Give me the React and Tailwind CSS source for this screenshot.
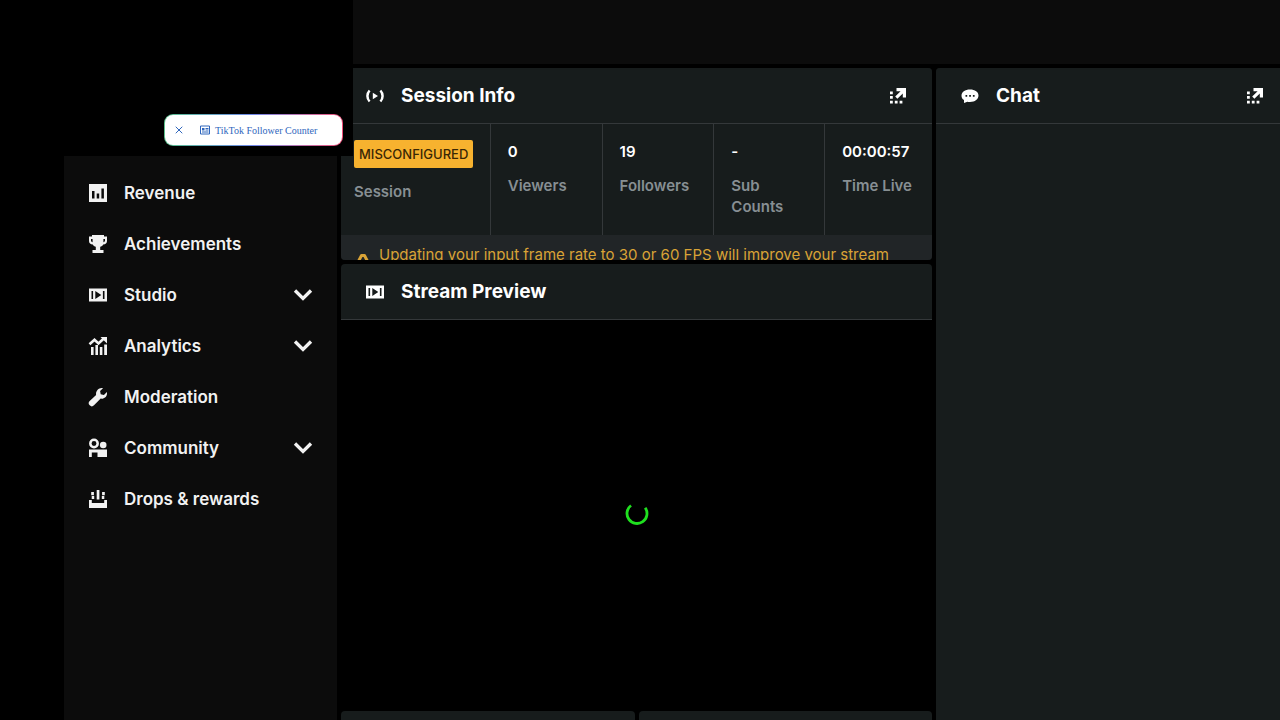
import { X } from "lucide-react";

function Icon({ children, className = "h-5 w-5" }) {
  return (
    <svg viewBox="0 0 20 20" fill="currentColor" aria-hidden="true" className={`shrink-0 ${className}`}>
      {children}
    </svg>
  );
}

const RevenueIcon = () => (
  <Icon>
    <path fillRule="evenodd" d="M1 1h18v18H1zM4 8v7.5h2.500V8zM8.700 10.500v5h2.500v-5zM13.400 5.500v10h2.500v-10z" />
  </Icon>
);

const TrophyIcon = () => (
  <Icon>
    <path
      fillRule="evenodd"
      d="M4 1h12v1.500h3V7c0 2-1.500 3.500-3.800 3.500c-.7 1.400-1.700 2-3 2.300V16h3.300v3h-11v-3h3.300v-3.200c-1.300-.3-2.300-.9-3-2.300C2.500 10.500 1 9 1 7V2.500h3zM3 5v1.500c0 .9.500 1.500 1.600 1.700V5zM15.400 5v3.200c1.100-.2 1.600-.8 1.600-1.700V5z"
    />
  </Icon>
);

const FilmIcon = () => (
  <Icon>
    <path fillRule="evenodd" d="M1 3.500h18v13H1zM3.500 6v8h1.600V6zM14.900 6v8h1.600V6zM7.300 6v8l6-4z" />
  </Icon>
);

const AnalyticsIcon = () => (
  <Icon>
    <path d="M1.500 8.200 6.500 3.700l4 3.700 5-4.700" fill="none" stroke="currentColor" strokeWidth="2.600" />
    <path d="M12.500 1H19v6.500zM3 11h2.600v8H3zM7.400 9h2.600v10H7.400zM11.800 11h2.600v8h-2.600zM16.200 8.500H19V19h-2.800z" />
  </Icon>
);

const WrenchIcon = () => (
  <Icon>
    <path d="M15 1.200 12.100 4.100l.6 3.200 3.200.6 3-2.900c.7 4-2.300 7.100-6.200 6.600L6 18.300a2.800 2.800 0 0 1-4.300-4.300L8.100 8c-.7-4.100 3-7.900 6.900-6.800z" />
  </Icon>
);

const CommunityIcon = () => (
  <Icon>
    <circle cx="6" cy="5.500" r="3.700" fill="none" stroke="currentColor" strokeWidth="2.500" />
    <circle cx="15.200" cy="7" r="3.300" />
    <path d="M1 11.500h18V19H9.500v-4.500H3.800V19H1z" />
  </Icon>
);

const DropsIcon = () => (
  <Icon>
    <path d="M8.700 1h2.700v9.500H8.700zM3.200 3h2.700v3.200H3.200zM3.700 7h2.500v3H3.700zM14.100 3h2.700v3.200h-2.700zM13.800 7h2.500v3h-2.500z" />
    <path d="M1 11h2.800v3h12.400v-3H19v8H1z" />
  </Icon>
);

const LiveIcon = () => (
  <Icon>
    <path
      d="M4.600 4.500a8 8 0 0 0 0 11M15.400 4.500a8 8 0 0 1 0 11"
      fill="none"
      stroke="currentColor"
      strokeWidth="2.500"
    />
    <path d="M7.800 6.800v6.400l5.200-3.200z" />
  </Icon>
);

const ChatIcon = () => (
  <Icon>
    <path
      fillRule="evenodd"
      d="M10 3.500c5 0 8.500 2.400 8.500 6s-3.500 6.500-8.500 6.500c-1 0-1.800-.1-2.600-.3L4 17v-3C2.300 13 1.500 11.500 1.500 9.700c0-3.700 3.500-6.200 8.500-6.200zM5.500 9v1.700h1.700V9zM9.200 9v1.700h1.700V9zM12.900 9v1.700h1.700V9z"
    />
  </Icon>
);

const PopoutIcon = () => (
  <Icon>
    <path d="M8.500 2H18v9.500h-3.200V7.400l-5.400 5.400-2.200-2.200 5.400-5.400H8.500z" />
    <path d="M2 5.500h2.800v2.700H2zM2 10h2.800v2.700H2zM2 14.700h2.800v2.700H2zM6.800 14.700h2.800v2.700H6.800zM11.600 14.700h2.800v2.700h-2.800z" />
  </Icon>
);

const navItems = [
  { label: "Revenue", icon: RevenueIcon },
  { label: "Achievements", icon: TrophyIcon },
  { label: "Studio", icon: FilmIcon, expandable: true },
  { label: "Analytics", icon: AnalyticsIcon, expandable: true },
  { label: "Moderation", icon: WrenchIcon },
  { label: "Community", icon: CommunityIcon, expandable: true },
  { label: "Drops & rewards", icon: DropsIcon },
];

const stats = [
  { value: "0", label: "Viewers" },
  { value: "19", label: "Followers" },
  { value: "-", label: "Sub Counts" },
  { value: "00:00:57", label: "Time Live" },
];

function PanelHeader({ icon: PanelIcon, title, popout, className = "px-6" }) {
  return (
    <header className={`flex h-14 shrink-0 items-center gap-4 border-b border-[#34383a] bg-[#171c1c] ${className}`}>
      <PanelIcon />
      <h2 className="flex-1 text-[19px] leading-6 font-bold">{title}</h2>
      {popout && (
        <button type="button" aria-label={`Pop out ${title}`}>
          <PopoutIcon />
        </button>
      )}
    </header>
  );
}

function Sidebar() {
  return (
    <nav className="ml-16 w-[273px] shrink-0 bg-[#0c0c0c] pt-[103px]">
      {navItems.map(({ label, icon: NavIcon, expandable }) => (
        <a key={label} href="#" className="flex h-[51px] items-center gap-4 px-6 text-[#f2f2f2]">
          <NavIcon />
          <span className="flex-1 text-[17px] leading-6 font-semibold">{label}</span>
          {expandable && (
            <Icon>
              <path d="m2 5.500 8 8 8-8" fill="none" stroke="currentColor" strokeWidth="3.300" />
            </Icon>
          )}
        </a>
      ))}
    </nav>
  );
}

function SessionInfo() {
  return (
    <section className="flex h-48 shrink-0 flex-col overflow-hidden rounded bg-[#171c1c]">
      <PanelHeader icon={LiveIcon} title="Session Info" popout />
      <dl className="grid h-[111px] shrink-0 grid-cols-[150fr_112fr_112fr_111fr_107fr] text-[15px] leading-[21px] font-semibold">
        <div className="flex flex-col items-start gap-[13px] border-r border-[#34383a] pt-4 pl-[13px]">
          <dd className="rounded-xs bg-[#f7b22f] px-[5px] text-[13px] leading-7 font-medium text-[#3a2705]">
            MISCONFIGURED
          </dd>
          <dt className="text-[#878f93]">Session</dt>
        </div>
        {stats.map(({ value, label }) => (
          <div
            key={label}
            className="flex flex-col gap-[13px] border-r border-[#34383a] pt-[17px] pr-4 pl-[17px] last:border-r-0"
          >
            <dd>{value}</dd>
            <dt className="text-[#878f93]">{label}</dt>
          </div>
        ))}
      </dl>
      <p className="flex shrink-0 gap-1.5 bg-[#212527] px-3 pt-2 text-[15px] leading-6 text-[#d9a336]">
        <svg viewBox="0 0 20 20" aria-hidden="true" className="mt-2 h-5 w-5 shrink-0">
          <path
            d="M8.500 4.500 2 17h16L11.500 4.500z"
            fill="none"
            stroke="currentColor"
            strokeWidth="3"
            strokeLinejoin="round"
          />
        </svg>
        Updating your input frame rate to 30 or 60 FPS will improve your stream
      </p>
    </section>
  );
}

function StreamPreview() {
  return (
    <section className="flex min-h-0 flex-1 flex-col overflow-hidden rounded-t bg-black">
      <PanelHeader icon={FilmIcon} title="Stream Preview" />
      <div className="flex flex-1 items-center justify-center" role="status" aria-label="Loading">
        <svg viewBox="0 0 24 24" fill="none" aria-hidden="true" className="h-6 w-6">
          <path d="M6 3.500A10 10 0 1 0 20.200 5.800" stroke="#1fe01f" strokeWidth="2.800" />
        </svg>
      </div>
    </section>
  );
}

function FollowerOverlay() {
  return (
    <div className="absolute top-0 left-0 flex h-[156px] w-[353px] items-end justify-end bg-black pr-2.5 pb-2.5">
      <div className="rounded-[9px] bg-linear-to-r from-[#5bbf8a] via-[#6f86e8] to-[#ee4d78] p-px">
        <div className="flex h-[30px] w-[177px] items-center rounded-lg bg-white pl-2 font-['Liberation_Serif',serif] text-[10px] text-[#2f66bd]">
          <button type="button" aria-label="Close">
            <X className="h-3 w-3" strokeWidth={2} />
          </button>
          <svg viewBox="0 0 12 12" fill="none" stroke="currentColor" aria-hidden="true" className="mr-1 ml-3.5 h-3 w-3">
            <path d="M1.500 2h9v8h-9zM6.500 4.500h3M6.500 6h3M3 8h6.500" />
            <path d="M3 4h2.500v2.500H3z" fill="currentColor" stroke="none" />
          </svg>
          <span>TikTok Follower Counter</span>
        </div>
      </div>
    </div>
  );
}

export default function App() {
  return (
    <div className="relative flex h-screen flex-col overflow-hidden bg-black font-[Inter,sans-serif] text-white">
      <div className="h-16 shrink-0 bg-[#0c0c0c]" />
      <div className="flex min-h-0 flex-1">
        <Sidebar />
        <main className="flex min-w-0 flex-1 gap-1 pt-1 pl-1">
          <div className="flex min-w-0 flex-1 flex-col gap-1">
            <SessionInfo />
            <StreamPreview />
            <div className="grid h-[9px] shrink-0 grid-cols-2 gap-1">
              <div className="rounded-t bg-[#171c1c]" />
              <div className="rounded-t bg-[#171c1c]" />
            </div>
          </div>
          <section className="w-[344px] shrink-0 overflow-hidden rounded-tl bg-[#171c1c]">
            <PanelHeader icon={ChatIcon} title="Chat" popout className="pr-[15px] pl-6" />
          </section>
        </main>
      </div>
      <FollowerOverlay />
    </div>
  );
}
